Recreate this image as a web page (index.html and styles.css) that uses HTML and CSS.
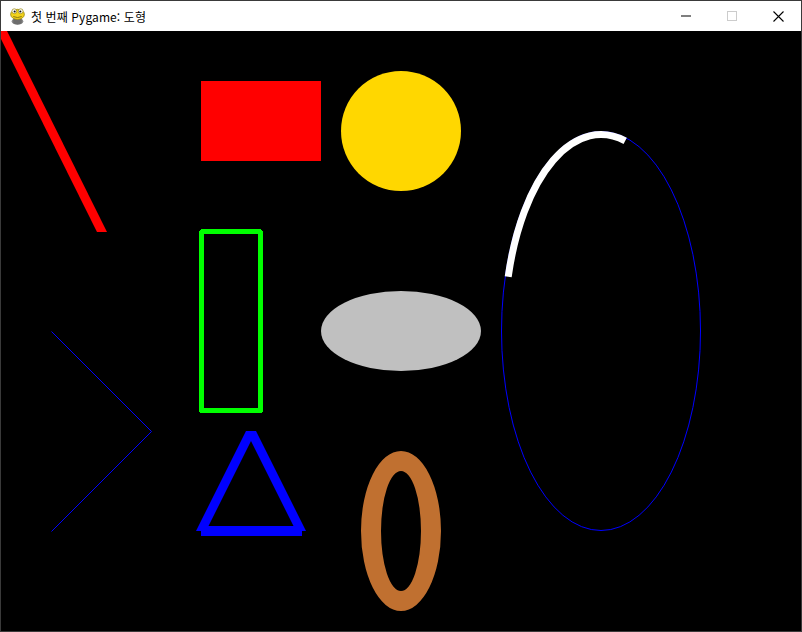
FILE: index.html
```html
<!DOCTYPE html>
<html lang="ko">
<head>
<meta charset="utf-8">
<title>첫 번째 Pygame: 도형</title>
<link rel="stylesheet" href="styles.css">
</head>
<body>
<div class="window">
  <div class="titlebar">
    <div class="title-left">
      <svg class="app-icon" width="17" height="19" viewBox="0 0 16 18">
        <ellipse cx="8" cy="13.5" rx="5.5" ry="3.5" fill="#8a8a8a"/>
        <rect x="4" y="11" width="8" height="5" rx="1.5" fill="#6d6d6d"/>
        <ellipse cx="8" cy="7" rx="6.5" ry="4.8" fill="#f2d21b" stroke="#9a8a10" stroke-width="0.8"/>
        <circle cx="5" cy="4" r="2.3" fill="#fff" stroke="#9a8a10" stroke-width="0.7"/>
        <circle cx="11" cy="4" r="2.3" fill="#fff" stroke="#9a8a10" stroke-width="0.7"/>
        <circle cx="5.3" cy="4.2" r="1" fill="#111"/>
        <circle cx="10.7" cy="4.2" r="1" fill="#111"/>
        <path d="M4 9 Q8 11 12 9" fill="none" stroke="#7a6a08" stroke-width="0.8"/>
      </svg>
      <span class="title-text">첫 번째 Pygame: 도형</span>
    </div>
    <div class="controls">
      <div class="ctrl">
        <svg width="10" height="10" viewBox="0 0 10 10"><rect x="0" y="4.5" width="10" height="1" fill="#000"/></svg>
      </div>
      <div class="ctrl">
        <svg width="10" height="10" viewBox="0 0 10 10"><rect x="0.5" y="0.5" width="9" height="9" fill="none" stroke="#cccccc" stroke-width="1"/></svg>
      </div>
      <div class="ctrl">
        <svg width="11" height="11" viewBox="0 0 11 11"><path d="M0.5 0.5 L10.5 10.5 M10.5 0.5 L0.5 10.5" stroke="#000" stroke-width="1.1"/></svg>
      </div>
    </div>
  </div>
  <svg class="canvas" width="800" height="600" viewBox="0 0 800 600">
    <rect x="0" y="0" width="800" height="600" fill="#000"/>
    <polygon points="-4,0 6,0 106,201 96,201" fill="#ff0000"/>
    <rect x="200" y="50" width="120" height="80" fill="#ff0000" shape-rendering="crispEdges"/>
    <circle cx="400" cy="100" r="60" fill="#ffd700"/>
    <rect x="200.5" y="200.5" width="59" height="179" fill="none" stroke="#00ff00" stroke-width="5" rx="1" shape-rendering="crispEdges"/>
    <ellipse cx="400" cy="300" rx="80" ry="40" fill="#c0c0c0"/>
    <ellipse cx="600" cy="300" rx="99.5" ry="199.5" fill="none" stroke="#0000ff" stroke-width="1"/>
    <path d="M624.2 109.8 A96.5 196.5 0 0 0 507.2 245.8" fill="none" stroke="#ffffff" stroke-width="7"/>
    <polyline points="50.5,300.5 150.5,400.5 50.5,500.5" fill="none" stroke="#0000ff" stroke-width="1"/>
    <polygon points="245,400 255,400 205,500 195,500" fill="#0000ff"/>
    <polygon points="245,400 255,400 305,500 295,500" fill="#0000ff"/>
    <rect x="200" y="495" width="101" height="10" fill="#0000ff" shape-rendering="crispEdges"/>
    <path d="M360 500 A40 80 0 1 0 440 500 A40 80 0 1 0 360 500 Z M380 500 A20 60 0 1 0 420 500 A20 60 0 1 0 380 500 Z" fill="#c07030" fill-rule="evenodd"/>
  </svg>
</div>
</body>
</html>
```

FILE: styles.css
```css
* { box-sizing: border-box; }
html, body {
  margin: 0;
  padding: 0;
  background: #000;
}
.window {
  width: 802px;
  height: 632px;
  border: 1px solid #3a3a3a;
  background: #fff;
  display: flex;
  flex-direction: column;
}
.titlebar {
  height: 30px;
  background: #fff;
  display: flex;
  align-items: center;
  justify-content: space-between;
}
.title-left {
  display: flex;
  align-items: center;
  padding-left: 8px;
  gap: 5px;
}
.app-icon {
  display: block;
  margin-top: 1px;
}
.title-text {
  font-family: "Noto Sans CJK KR", "Noto Sans", sans-serif;
  font-size: 12px;
  letter-spacing: 0.1px;
  color: #000;
  line-height: 16px;
  margin-top: 2px;
}
.controls {
  display: flex;
  height: 30px;
}
.ctrl {
  width: 46px;
  height: 30px;
  display: flex;
  align-items: center;
  justify-content: center;
}
.ctrl svg { display: block; }
.canvas {
  display: block;
  width: 800px;
  height: 600px;
}
```
